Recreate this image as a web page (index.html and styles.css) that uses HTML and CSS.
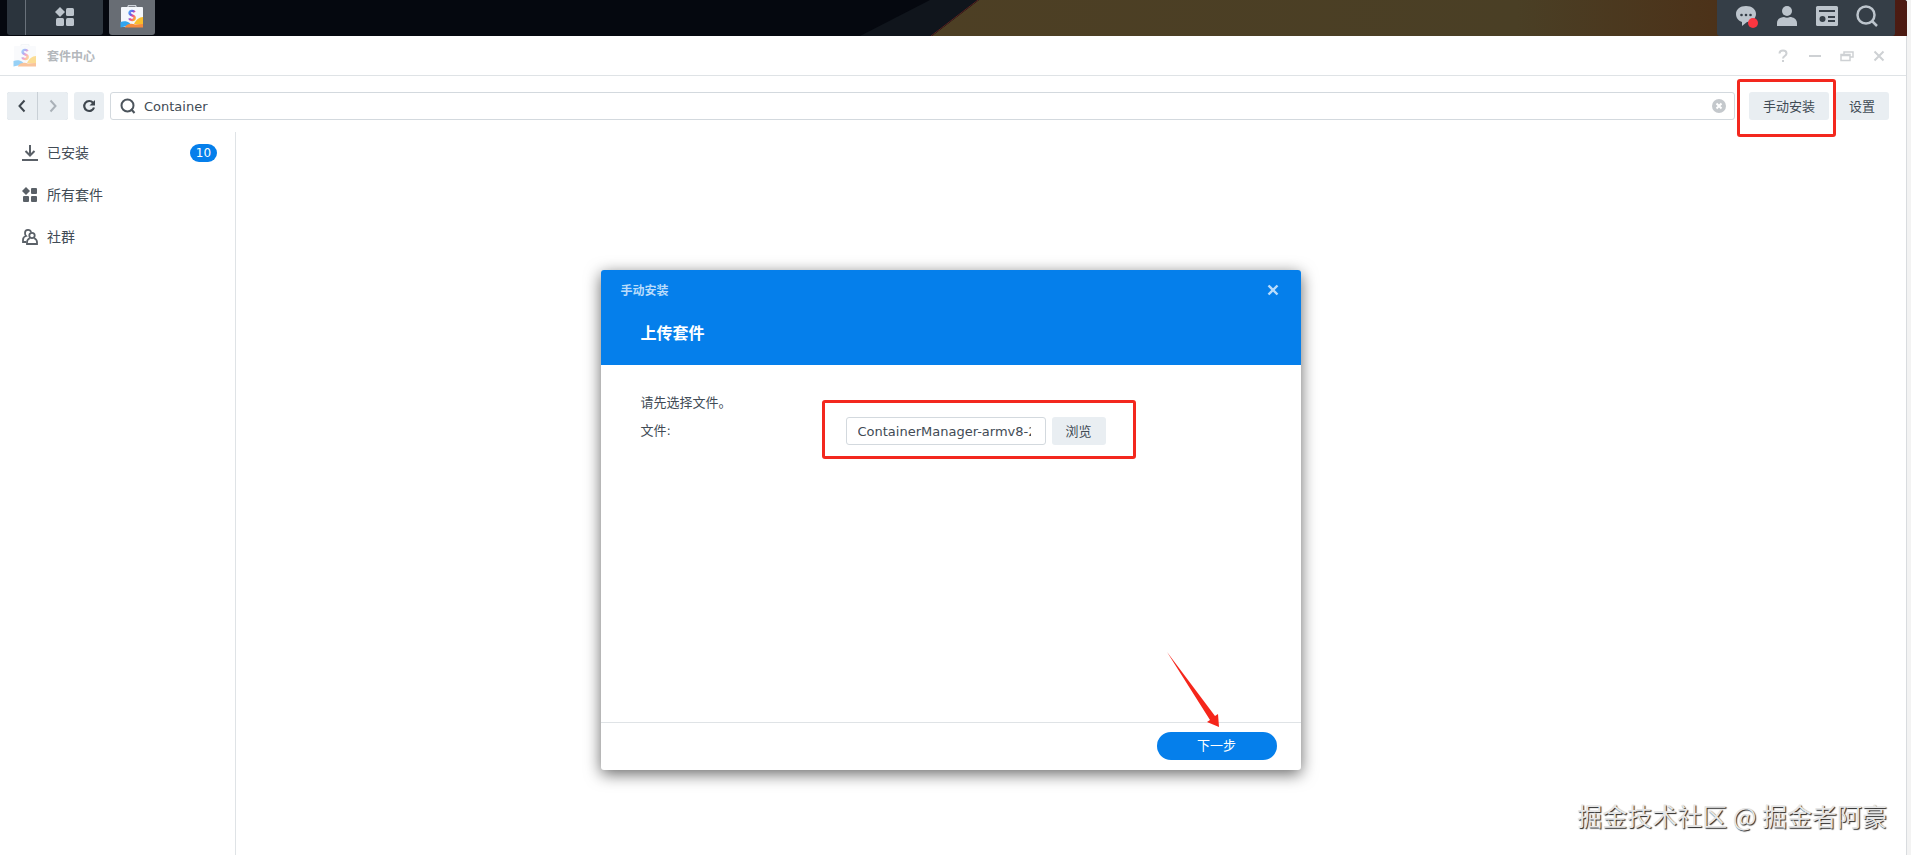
FILE: index.html
```
<!DOCTYPE html>
<html lang="zh-CN">
<head>
<meta charset="UTF-8">
<title>套件中心</title>
<link rel="stylesheet" href="styles.css">
</head>
<body>
<header class="taskbar">
	<svg class="wallpaper" viewBox="0 0 1907 36" preserveAspectRatio="none" aria-hidden="true">
		<defs>
			<linearGradient id="wall"><stop offset="0" stop-color="#4d3f24"/><stop offset=".6" stop-color="#4a3f25"/><stop offset=".8" stop-color="#4c3219"/><stop offset="1" stop-color="#4c1a12"/></linearGradient>
		</defs>
		<path d="M932 36 979 0H1907V36z" fill="url(#wall)"/>
		<path d="M860 36 930 0H978L931 36z" fill="#10151c"/>
		<path d="M931 36 978 0" stroke="#5c2420" fill="none"/>
	</svg>
	<div class="task-left">
		<span class="task-grip"></span>
		<button class="task-btn task-menu" aria-label="主菜单">
			<svg width="20" height="20" viewBox="0 0 20 20" fill="#bcc4cc"><path d="M5 0 10 5 5 10 0 5z"/><rect x="11" y="1" width="8" height="8" rx="1.500"/><rect x="1" y="11" width="8" height="8" rx="1.500"/><rect x="11" y="11" width="8" height="8" rx="1.500"/></svg>
		</button>
		<button class="task-btn task-app" aria-label="套件中心">
			<svg width="24" height="24" viewBox="0 0 24 24"><use href="#pkg"/></svg>
		</button>
	</div>
	<div class="task-right">
		<button class="tray-btn" aria-label="通知">
			<svg width="24" height="24" viewBox="0 0 24 24"><path d="M11 2C5 2 1 5.500 1 10s3 7 6 8v4l5-4c5-.5 9-3.500 9-8s-4-8-10-8z" fill="#bcc4cc"/><g fill="#353e47"><circle cx="6.500" cy="11" r="1.300"/><circle cx="11" cy="11" r="1.300"/><circle cx="15.500" cy="11" r="1.300"/></g><circle cx="18" cy="19" r="5" fill="#fb3640"/></svg>
		</button>
		<button class="tray-btn" aria-label="用户">
			<svg width="24" height="24" viewBox="0 0 24 24" fill="#bcc4cc"><circle cx="12" cy="7" r="5"/><path d="M2 22v-3c0-4 4-6 7-6 2 1 4 1 6 0 3 0 7 2 7 6v3z"/></svg>
		</button>
		<button class="tray-btn" aria-label="小工具">
			<svg width="24" height="24" viewBox="0 0 24 24"><rect x="1" y="2" width="22" height="20" rx="1.500" fill="#bcc4cc"/><path d="M4 7h16M13 13h7M13 17h7" stroke="#353e47" stroke-width="2"/><circle cx="7.500" cy="15" r="3" fill="#353e47"/></svg>
		</button>
		<button class="tray-btn" aria-label="搜索">
			<svg width="24" height="24" viewBox="0 0 24 24" fill="none" stroke="#bcc4cc" stroke-width="2.500"><circle cx="11" cy="11" r="8.500"/><path d="m17 17 5 5"/></svg>
		</button>
	</div>
</header>

<svg class="defs" width="0" height="0" aria-hidden="true">
	<defs>
		<linearGradient id="sgrad" x1="0" y1="0" x2="1" y2="1"><stop offset="0" stop-color="#4ba9f5"/><stop offset=".35" stop-color="#6a5bea"/><stop offset=".6" stop-color="#f0508c"/><stop offset="1" stop-color="#fbb62a"/></linearGradient>
		<g id="pkg">
			<path d="M8 2V.7h8V2" fill="none" stroke="#e6ebf0"/>
			<rect x="1" y="2" width="22" height="20" rx="1" fill="#f4f7fb"/>
			<path d="M14 19c2-4 5-7 9-7v8z" fill="#f9bd2c"/>
			<path d="M.5 17c3-1.500 7-1 9 1l2 2-11 2.500z" fill="#32a5ee"/>
			<path d="M5 22c2-3 6-4 10-2.500l8-.5v3.500H5z" fill="#f58a3c"/>
			<path d="M14.600 7.200C13.800 5.500 9.600 5.200 9.500 8c0 2.800 5.300 1.900 5.200 4.900-.1 2.800-4.600 2.700-5.500.5" fill="none" stroke="url(#sgrad)" stroke-width="2.400"/>
		</g>
	</defs>
</svg>

<main class="window">
	<div class="titlebar">
		<svg class="title-icon" width="24" height="24" viewBox="0 0 24 24"><use href="#pkg"/></svg>
		<h1 class="title">套件中心</h1>
		<div class="win-tools">
			<button class="win-btn" aria-label="帮助"><svg width="16" height="16" viewBox="0 0 16 16"><path d="M4.500 5.500C4.500 3.500 6 2.500 8 2.500s3.500 1 3.500 3C11.500 8 8 8 8 10.500M8 12v2"/></svg></button>
			<button class="win-btn" aria-label="最小化"><svg width="16" height="16" viewBox="0 0 16 16"><path d="M2 8h12"/></svg></button>
			<button class="win-btn" aria-label="还原"><svg class="thin" width="16" height="16" viewBox="0 0 16 16"><path d="M2 6.500h9v6H2zM2 7.500h9M5 6V4h9v5h-3M5 4h9"/></svg></button>
			<button class="win-btn" aria-label="关闭"><svg width="16" height="16" viewBox="0 0 16 16"><path d="m3.500 3.500 9 9M12.500 3.500l-9 9"/></svg></button>
		</div>
	</div>

	<div class="toolbar">
		<div class="nav">
			<button class="btn nav-btn" aria-label="后退"><svg width="16" height="16" viewBox="0 0 16 16"><path d="m10.500 2.500-5 5.500 5 5.500" fill="none" stroke="#3f474f" stroke-width="2"/></svg></button>
			<button class="btn nav-btn" aria-label="前进"><svg width="16" height="16" viewBox="0 0 16 16"><path d="m5.500 2.500 5 5.500-5 5.500" fill="none" stroke="#aab1b8" stroke-width="2"/></svg></button>
		</div>
		<button class="btn reload" aria-label="刷新"><svg width="16" height="16" viewBox="0 0 16 16"><path d="M12 4.700A5 5 0 1 0 13 9.500" fill="none" stroke="#3f474f" stroke-width="2.200"/><path d="M14 2v5.500H8.500z" fill="#3f474f"/></svg></button>
		<div class="search">
			<svg width="16" height="16" viewBox="0 0 16 16" fill="none" stroke="#4c545c" stroke-width="2"><circle cx="7.500" cy="7.500" r="6"/><path d="m11 11 3.500 4"/></svg>
			<input class="search-input" type="text" aria-label="搜索" value="Container">
			<button class="clear" aria-label="清除"><svg width="14" height="14" viewBox="0 0 14 14"><circle cx="7" cy="7" r="7" fill="#c4c8cc"/><path d="m4.500 4.500 5 5M9.500 4.500l-5 5" stroke="#fff" stroke-width="2"/></svg></button>
		</div>
		<div class="actions">
			<button class="btn btn-text marked mark-top">手动安装</button>
			<button class="btn btn-text">设置</button>
		</div>
	</div>

	<div class="content">
		<nav class="sidebar">
			<a class="side-item" href="#installed">
				<svg width="16" height="16" viewBox="0 0 16 16" fill="none" stroke="#5a6067" stroke-width="2"><path d="M8 0v10M3.500 6 8 10.500 12.500 6M0 15h16"/></svg>
				<span class="side-label">已安装</span>
				<span class="badge">10</span>
			</a>
			<a class="side-item" href="#all">
				<svg width="16" height="16" viewBox="0 0 16 16" fill="#5a6067"><path d="M4 0 8 4 4 8 0 4z"/><rect x="9" y="1" width="6" height="6" rx="1"/><rect x="1" y="9" width="6" height="6" rx="1"/><rect x="9" y="9" width="6" height="6" rx="1"/></svg>
				<span class="side-label">所有套件</span>
			</a>
			<a class="side-item" href="#community">
				<svg width="16" height="16" viewBox="0 0 16 16" fill="none" stroke="#5a6067" stroke-width="1.800"><path d="M9 3.500C9 0 3 0 3 4c0 1.500.5 2.500 1 3-2 .5-3 2-3 4v2h3"/><circle cx="10" cy="6.500" r="2.700"/><path d="M7.800 9.200C6 10 5 11.300 5 13v2h10v-2c0-1.700-1-3-2.800-3.800"/></svg>
				<span class="side-label">社群</span>
			</a>
		</nav>
		<section class="results"></section>
	</div>
</main>

<div class="dialog" role="dialog" aria-labelledby="dlg-title">
	<div class="dlg-head">
		<div class="dlg-bar">
			<span id="dlg-title" class="dlg-title">手动安装</span>
			<button class="dlg-close" aria-label="关闭"><svg width="12" height="12" viewBox="0 0 12 12"><path d="m1.500 1.500 9 9M10.500 1.500l-9 9" stroke="#b9dcfb" stroke-width="2.400"/></svg></button>
		</div>
		<h2 class="dlg-step">上传套件</h2>
	</div>
	<div class="dlg-body">
		<p class="dlg-desc">请先选择文件。</p>
		<div class="field">
			<label for="file">文件:</label>
			<div class="file-row marked mark-file">
				<input id="file" class="file-input" type="text" value="ContainerManager-armv8-20.10.23-1437.spk">
				<button class="btn btn-text">浏览</button>
			</div>
		</div>
	</div>
	<div class="dlg-foot">
		<button class="next">下一步</button>
		<svg class="arrow" width="52" height="75" viewBox="0 0 52 75" aria-hidden="true"><path d="M0 0 48 64 51 62 52 75 40 70 43 68z" fill="#f5261b"/></svg>
	</div>
</div>

<div class="watermark">掘金技术社区 @ 掘金者阿豪</div>
</body>
</html>
```

FILE: styles.css
```
*{
	box-sizing:border-box;
}
body{
	margin:0;
	height:100vh;
	padding-right:4px;
	display:flex;
	flex-direction:column;
	overflow:hidden;
	background-color:#f3f3f3;
	font-family:"DejaVu Sans","Noto Sans CJK SC",sans-serif;
	font-size:13px;
	color:#414b55;
}
button{
	border:0;
	padding:0;
	background:none;
	font:inherit;
	color:inherit;
	cursor:pointer;
}
input{
	font:inherit;
	color:inherit;
	outline:none;
}
svg{
	display:block;
	flex:none;
}
.defs{
	position:absolute;
}

/* taskbar */
.taskbar{
	position:relative;
	flex:none;
	height:36px;
	padding:0 12px 0 7px;
	display:flex;
	justify-content:space-between;
	background-color:#05080f;
	border-radius:0 3px 0 0;
	overflow:hidden;
}
.wallpaper{
	position:absolute;
	left:0;
	top:0;
	width:100%;
	height:100%;
}
.task-left,
.task-right{
	position:relative;
	display:flex;
}
.task-grip{
	width:19px;
	height:35px;
	background-color:#2b343d;
	border-right:1px solid #69717a;
	border-radius:0 0 0 3px;
}
.task-btn{
	height:35px;
	display:flex;
	align-items:center;
	justify-content:center;
}
.task-menu{
	width:77px;
	padding-bottom:2px;
	background-color:#2f3841;
	border-radius:0 0 3px 0;
}
.task-app{
	width:46px;
	margin-left:6px;
	padding-bottom:2px;
	background-color:#686d74;
	border-radius:0 0 3px 3px;
}
.task-right{
	width:178px;
	padding:0 8px 4px 10px;
	justify-content:space-around;
	background-color:#353e47;
	border-radius:0 0 3px 3px;
}
.tray-btn{
	width:24px;
	display:flex;
	align-items:center;
	justify-content:center;
}

/* window */
.window{
	flex:1;
	min-height:0;
	display:flex;
	flex-direction:column;
	background-color:#fff;
	border-right:1px solid #d9dcdf;
}
.titlebar{
	flex:none;
	height:40px;
	padding:0 19px 0 13px;
	display:flex;
	align-items:center;
	border-bottom:1px solid #dfe3e6;
}
.title-icon{
	opacity:.5;
}
.title{
	flex:1;
	margin:0 0 0 10px;
	font-size:12px;
	font-weight:bold;
	color:#b4b8bc;
}
.win-tools{
	display:flex;
	gap:16px;
}
.win-btn svg{
	fill:none;
	stroke:#ced1d4;
	stroke-width:2;
}
.win-btn .thin{
	stroke-width:1.5;
}
.toolbar{
	flex:none;
	padding:16px 17px 12px 7px;
	display:flex;
	gap:6px;
}
.btn{
	height:28px;
	background-color:#e9eef2;
	border-radius:3px;
}
.nav{
	display:flex;
	gap:1px;
	background-color:#c9d0d6;
	border-radius:3px;
}
.nav-btn,
.reload{
	width:30px;
	display:flex;
	align-items:center;
	justify-content:center;
}
.nav-btn:first-child{
	border-radius:3px 0 0 3px;
}
.nav-btn:last-child{
	border-radius:0 3px 3px 0;
}
.btn-text{
	padding:0 14px 2px;
	white-space:nowrap;
}
.search{
	flex:1;
	height:28px;
	padding:0 8px 0 9px;
	display:flex;
	align-items:center;
	gap:8px;
	border:1px solid #d3d9de;
	border-radius:3px;
}
.search-input{
	flex:1;
	min-width:0;
	padding:0;
	border:0;
}
.actions{
	display:flex;
	gap:6px;
	margin-left:8px;
}

/* red frames around the controls to use */
.marked{
	position:relative;
}
.marked::after{
	content:"";
	position:absolute;
	border:3px solid #f3281e;
	border-radius:3px;
	pointer-events:none;
}
.mark-top::after{
	inset:-13px -7px -17px -12px;
}
.mark-file::after{
	inset:-17px -30px -14px -24px;
}

/* content */
.content{
	flex:1;
	min-height:0;
	display:flex;
}
.sidebar{
	width:236px;
	border-right:1px solid #dfe3e6;
}
.side-item{
	height:42px;
	padding:0 18px 0 22px;
	display:flex;
	align-items:center;
	gap:9px;
	font-size:14px;
	color:#414b55;
	text-decoration:none;
}
.side-label{
	padding-bottom:2px;
}
.badge{
	min-width:27px;
	height:18px;
	margin-left:auto;
	border-radius:9px;
	background-color:#057feb;
	color:#fff;
	font-size:12px;
	line-height:18px;
	text-align:center;
}
.results{
	flex:1;
}

/* upload dialog */
.dialog{
	position:absolute;
	left:calc(50% - 355px);
	top:270px;
	width:700px;
	height:500px;
	display:flex;
	flex-direction:column;
	background-color:#fff;
	border-radius:3px;
	box-shadow:0 4px 16px rgba(0,0,0,.6);
}
.dlg-head{
	height:95px;
	padding:0 20px;
	border-radius:3px 3px 0 0;
	background-color:#057feb;
	color:#fff;
}
.dlg-bar{
	height:40px;
	display:flex;
	align-items:center;
	justify-content:space-between;
	font-size:12px;
	font-weight:bold;
	color:#b9dcfb;
}
.dlg-title{
	padding-bottom:2px;
}
.dlg-close{
	padding:2px;
}
.dlg-step{
	margin:10px 20px 0;
	font-size:16px;
	line-height:28px;
}
.dlg-body{
	flex:1;
	padding:24px 40px;
}
.dlg-desc{
	margin:0;
	line-height:28px;
}
.field{
	display:flex;
}
.field label{
	width:205px;
	line-height:28px;
}
.file-row{
	display:flex;
	gap:6px;
}
.file-input{
	width:200px;
	height:28px;
	padding:0 14px 0 11px;
	border:1px solid #d3d9de;
	border-radius:3px;
}
.dlg-foot{
	position:relative;
	height:48px;
	padding:0 24px 2px;
	display:flex;
	align-items:center;
	justify-content:flex-end;
	border-top:1px solid #dfe3e6;
}
.next{
	width:120px;
	height:28px;
	padding-bottom:2px;
	border-radius:14px;
	background-color:#057feb;
	color:#fff;
}
.arrow{
	position:absolute;
	right:82px;
	bottom:43px;
}

.watermark{
	position:absolute;
	right:24px;
	bottom:22px;
	font-family:"Noto Sans CJK SC",sans-serif;
	font-size:25px;
	line-height:36px;
	color:#e6e6e6;
	text-shadow:1px 1px 1px #222;
}
```
